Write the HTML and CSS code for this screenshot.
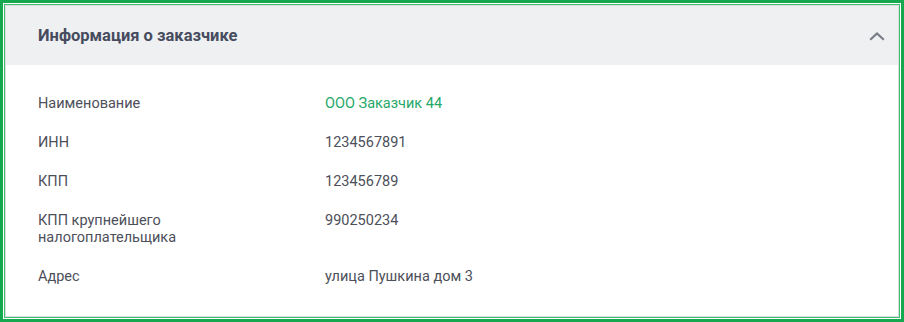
FILE: index.html
```html
<!DOCTYPE html>
<html lang="ru">
<head>
<meta charset="utf-8">
<title>Информация о заказчике</title>
<link rel="stylesheet" href="styles.css">
</head>
<body>
<div class="frame">
  <div class="frame-inner">
    <section class="card">
      <header class="card-header">
        <h2 class="card-title">Информация о заказчике</h2>
        <svg class="chevron" width="16" height="10" viewBox="0 0 16 10" aria-hidden="true">
          <path d="M2 8 L8 2.5 L14 8" fill="none" stroke="#7a7d85" stroke-width="2.2" stroke-linecap="square"/>
        </svg>
      </header>
      <div class="card-body">
        <dl class="info">
          <dt class="label">Наименование</dt>
          <dd class="value link">ООО Заказчик 44</dd>
          <dt class="label">ИНН</dt>
          <dd class="value">1234567891</dd>
          <dt class="label">КПП</dt>
          <dd class="value">123456789</dd>
          <dt class="label">КПП крупнейшего налогоплательщика</dt>
          <dd class="value">990250234</dd>
          <dt class="label">Адрес</dt>
          <dd class="value">улица Пушкина дом 3</dd>
        </dl>
      </div>
    </section>
  </div>
</div>
</body>
</html>
```

FILE: styles.css
```css
* { box-sizing: border-box; }
html, body { margin: 0; padding: 0; background: #fff; }
body {
  width: 904px;
  height: 322px;
  font-family: Roboto, "Liberation Sans", sans-serif;
  color: #4d4f5a;
}
.frame {
  height: 322px;
  border: 3px solid #16a84f;
  padding: 1px;
  background: #fff;
}
.frame-inner {
  height: 100%;
  border: 1px solid #3dbf6a;
}
.card {
  height: 100%;
  border: 1px solid #dcdde0;
  background: #fff;
  display: flex;
  flex-direction: column;
}
.card-header {
  height: 59px;
  flex: 0 0 59px;
  background: #eef0f2;
  display: flex;
  align-items: center;
  justify-content: space-between;
  padding: 0 13px 0 32px;
}
.card-title {
  margin: 0;
  font-size: 16.5px;
  font-weight: 700;
  color: #474b5e;
}
.chevron { display: block; }
.card-body {
  flex: 1;
  padding: 30px 32px 0 32px;
}
.info {
  margin: 0;
  display: grid;
  grid-template-columns: 287px 1fr;
  row-gap: 22px;
  font-size: 14.5px;
  line-height: 17px;
}
.label {
  margin: 0;
  max-width: 200px;
}
.value { margin: 0; }
.link { color: #27a869; }
```
